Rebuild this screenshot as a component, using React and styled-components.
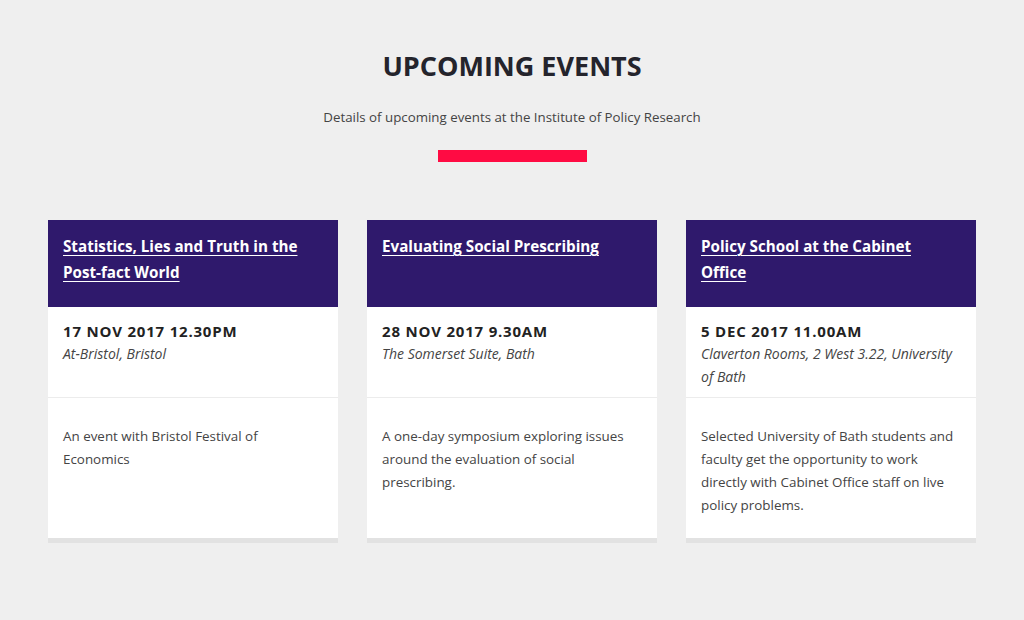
import React from "react";
import styled, { createGlobalStyle } from "styled-components";

const GlobalStyle = createGlobalStyle`
  body {
    margin: 0;
    background: #efefef;
    font-family: "Open Sans", "Noto Sans", sans-serif;
    color: #333;
  }
`;

const Page = styled.div`
  padding-top: 49px;
  display: flex;
  flex-direction: column;
  align-items: center;
`;

const Title = styled.h1`
  margin: 0;
  font-size: 27px;
  line-height: 34px;
  font-weight: 700;
  color: #24242c;
`;

const Subtitle = styled.p`
  margin: 23px 0 0;
  font-size: 13.3px;
  line-height: 22px;
  color: #444;
`;

const Bar = styled.div`
  width: 149px;
  height: 12px;
  margin-top: 22px;
  background: #ff0b43;
`;

const Cards = styled.div`
  margin-top: 58px;
  display: grid;
  grid-template-columns: repeat(3, 290px);
  gap: 29px;
  justify-content: center;
`;

const Card = styled.div`
  display: flex;
  flex-direction: column;
  background: #fff;
  border-bottom: 5px solid #e2e2e2;
`;

const Header = styled.div`
  height: 87px;
  box-sizing: border-box;
  padding: 13px 20px 13px 15px;
  background: #2f196c;
`;

const HeaderLink = styled.a`
  color: #fff;
  font-size: 15.2px;
  line-height: 26px;
  font-weight: 700;
  text-decoration: underline;
  text-decoration-thickness: 1px;
  text-underline-offset: 3px;
`;

const Details = styled.div`
  height: 91px;
  box-sizing: border-box;
  padding: 13px 15px 0;
  border-bottom: 1px solid #ececec;
`;

const Date = styled.div`
  font-size: 15px;
  line-height: 22px;
  font-weight: 700;
  color: #222;
  letter-spacing: 0.8px;
`;

const Location = styled.div`
  font-size: 14px;
  line-height: 23px;
  font-style: italic;
  color: #444;
`;

const Body = styled.div`
  min-height: 140px;
  box-sizing: border-box;
  padding: 27px 15px 13px;
  font-size: 13.4px;
  line-height: 23px;
  color: #444;
`;

const events = [
  {
    title: "Statistics, Lies and Truth in the Post-fact World",
    date: "17 NOV 2017 12.30PM",
    location: "At-Bristol, Bristol",
    text: "An event with Bristol Festival of Economics",
  },
  {
    title: "Evaluating Social Prescribing",
    date: "28 NOV 2017 9.30AM",
    location: "The Somerset Suite, Bath",
    text: "A one-day symposium exploring issues around the evaluation of social prescribing.",
  },
  {
    title: "Policy School at the Cabinet Office",
    date: "5 DEC 2017 11.00AM",
    location: "Claverton Rooms, 2 West 3.22, University of Bath",
    text: "Selected University of Bath students and faculty get the opportunity to work directly with Cabinet Office staff on live policy problems.",
  },
];

const App = () => {
  return (
    <Page>
      <GlobalStyle />
      <Title>UPCOMING EVENTS</Title>
      <Subtitle>Details of upcoming events at the Institute of Policy Research</Subtitle>
      <Bar />
      <Cards>
        {events.map(ev => (
          <Card key={ev.title}>
            <Header>
              <HeaderLink href="#">{ev.title}</HeaderLink>
            </Header>
            <Details>
              <Date>{ev.date}</Date>
              <Location>{ev.location}</Location>
            </Details>
            <Body>{ev.text}</Body>
          </Card>
        ))}
      </Cards>
    </Page>
  );
};

export default App;
